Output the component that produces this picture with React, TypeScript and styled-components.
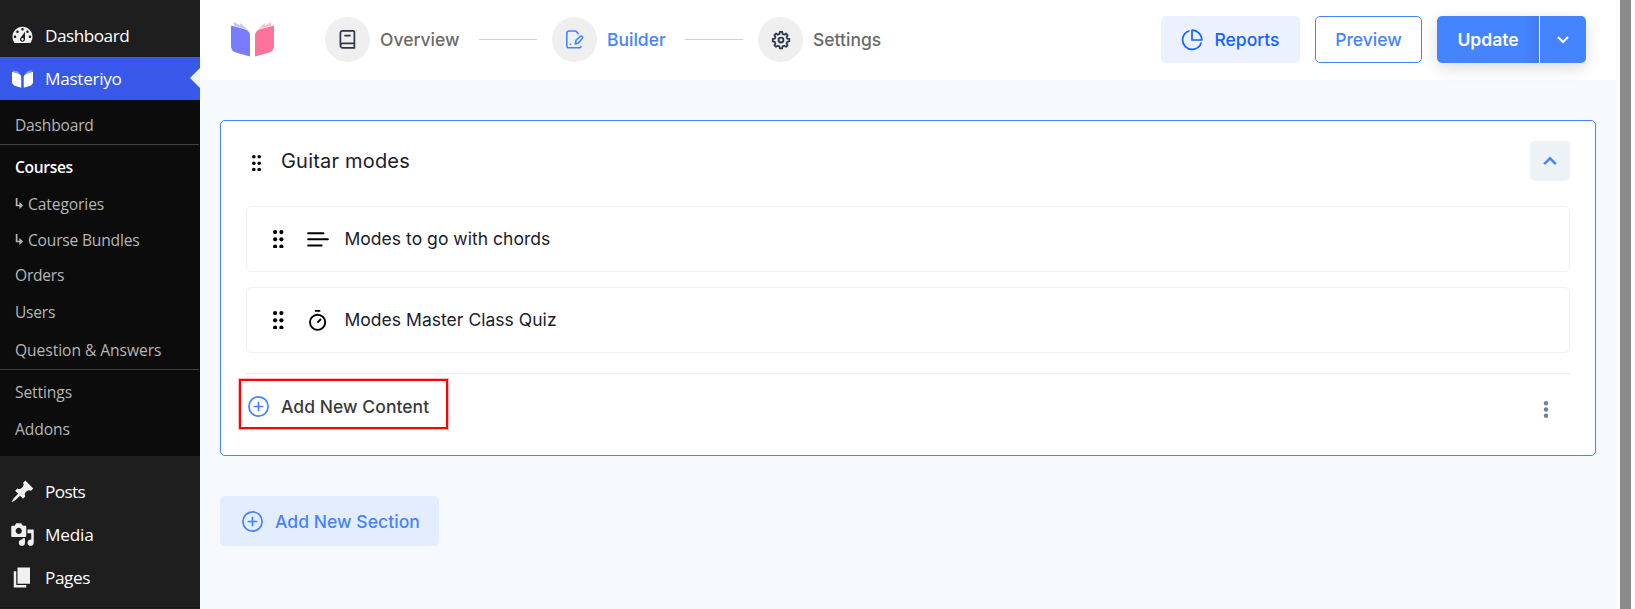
import React from 'react';
import styled, { createGlobalStyle, css } from 'styled-components';

const GlobalStyle = createGlobalStyle`
  * { box-sizing: border-box; }
  html, body { margin: 0; padding: 0; overflow: hidden; }
  body { font-family: Inter, "Liberation Sans", sans-serif; font-size: 17.5px; background: #fcfcfc; }
  svg { display: block; flex: none; }
  button { font: inherit; margin: 0; padding: 0; border: 0; background: none; }
`;

const Page = styled.div`
  display: flex;
  width: 1635px;
  height: 609px;
  overflow: hidden;
`;

const Sidebar = styled.nav`
  width: 200px;
  flex: none;
  background: #1e1e1e;
  font-family: "Open Sans", "Noto Sans", sans-serif;
  overflow: hidden;
`;

const MenuItem = styled.div<{ $active?: boolean; $first?: boolean; $spacing: number }>`
  position: relative;
  display: flex;
  align-items: center;
  height: 43px;
  margin-top: ${p => (p.$first ? 14 : 0)}px;
  padding-left: 10px;
  gap: 10px;
  color: #fff;
  font-size: 17.2px;
  letter-spacing: ${p => p.$spacing}px;
  background: ${p => (p.$active ? '#3858e9' : 'transparent')};
  ${p => p.$active && css`
    &::after {
      content: "";
      position: absolute;
      right: 0;
      top: 11px;
      border: 10px solid transparent;
      border-left-width: 0;
      border-right-color: #f0f0f1;
    }
  `}
`;

const Submenu = styled.div`
  height: 356px;
  padding-top: 7px;
  background: #0c0c0c;
`;

const SubItem = styled.div<{ $h: number; $current?: boolean; $spacing: number }>`
  display: flex;
  align-items: center;
  height: ${p => p.$h}px;
  padding: 0 0 2px 15px;
  font-size: 15.6px;
  letter-spacing: ${p => p.$spacing}px;
  font-weight: ${p => (p.$current ? 600 : 400)};
  color: ${p => (p.$current ? '#fff' : '#b6b6b7')};
  white-space: nowrap;
`;

const SubArrow = styled.svg`
  margin-right: 4px;
`;

const SubRule = styled.div<{ $gap: number }>`
  height: 1px;
  margin: 0 1px ${p => p.$gap}px 0;
  background: #414141;
`;

const LowerMenu = styled.div`
  height: 152px;
  padding-top: 14px;
  border-bottom: 1px solid #141414;
`;

const Main = styled.main`
  width: 1416px;
  flex: none;
  background: #f6fafd;
`;

const Header = styled.header`
  display: flex;
  align-items: center;
  height: 80px;
  padding: 0 30px 1px 31px;
  background: #fff;
`;

const Steps = styled.div`
  display: flex;
  align-items: center;
  margin-left: 51px;
`;

const Step = styled.div<{ $active?: boolean; $w: number }>`
  display: flex;
  align-items: center;
  gap: 10px;
  width: ${p => p.$w}px;
  font-weight: 500;
  color: ${p => (p.$active ? '#4584ff' : '#6b6b6b')};
  white-space: nowrap;
`;

const StepIcon = styled.span`
  display: flex;
  align-items: center;
  justify-content: center;
  width: 45px;
  height: 45px;
  flex: none;
  border-radius: 50%;
  background: #efefef;
`;

const StepLine = styled.div`
  width: 58px;
  height: 1px;
  margin-right: 15px;
  background: #cfd0d0;
`;

const Actions = styled.div`
  display: flex;
  gap: 15px;
  margin-left: auto;
`;

const Button = styled.button<{ $kind: 'soft' | 'outline'; $w: number }>`
  display: flex;
  align-items: center;
  justify-content: center;
  gap: 11px;
  width: ${p => p.$w}px;
  height: 47px;
  border-radius: 5px;
  font-weight: 500;
  color: ${p => (p.$kind === 'soft' ? '#1363ff' : '#4584ff')};
  background: ${p => (p.$kind === 'soft' ? '#ebf1ff' : '#fff')};
  border: ${p => (p.$kind === 'outline' ? '1px solid #4584ff' : '0')};
`;

const SplitButton = styled.div`
  display: flex;
  height: 47px;
  border-radius: 5px;
  box-shadow: 0 5px 16px rgba(0, 0, 0, 0.14);
  color: #fff;
`;

const SplitMain = styled.button`
  width: 102px;
  border-radius: 5px 0 0 5px;
  background: linear-gradient(90deg, #4584ff 85%, #407bee);
  color: #fff;
  font-weight: 600;
`;

const SplitToggle = styled.button`
  display: flex;
  align-items: center;
  justify-content: center;
  width: 47px;
  padding-right: 1px;
  border-left: 1px solid #fff;
  border-radius: 0 5px 5px 0;
  background: #4584ff;
`;

const Content = styled.div`
  padding: 40px 20px 0;
`;

const SectionCard = styled.section`
  height: 336px;
  padding: 20px 25px 0;
  border: 1px solid #4584ff;
  border-radius: 5px;
  background: #fff;
`;

const SectionHead = styled.div`
  display: flex;
  align-items: center;
  height: 40px;
  margin-bottom: 25px;
  padding-left: 6px;
`;

const SectionTitle = styled.h2`
  margin: 0 auto 0 20px;
  font-size: 20px;
  font-weight: 400;
  letter-spacing: 0.2px;
  color: #1a202c;
`;

const CollapseButton = styled.button`
  display: flex;
  align-items: center;
  justify-content: center;
  width: 40px;
  height: 40px;
  border-radius: 5px;
  background: #edf2f7;
`;

const LessonRow = styled.div`
  display: flex;
  align-items: center;
  height: 66px;
  margin-bottom: 15px;
  padding-left: 26px;
  border: 1px solid #edf2f7;
  border-radius: 5px;
  color: #1a202c;
`;

const LessonIcon = styled.span`
  display: flex;
  width: 26px;
  margin: 0 12px 0 23px;
`;

const LessonTitle = styled.span`
  padding-bottom: 2px;
  letter-spacing: 0.03px;
`;

const SectionFoot = styled.div`
  display: flex;
  align-items: flex-start;
  justify-content: space-between;
  margin-top: 20px;
  padding-right: 19px;
  border-top: 1px solid #ecedf0;
`;

const AddContent = styled.button`
  display: flex;
  align-items: center;
  gap: 12px;
  width: 209px;
  height: 50px;
  margin: 5px 0 0 -7px;
  padding: 5px 0 0 7px;
  border: 2px solid #f00;
  outline: 1px solid #ffb9b9;
  font-weight: 500;
  letter-spacing: 0.05px;
  color: #3a3a3a;
`;

const MoreButton = styled.button`
  margin-top: 26px;
`;

const AddSection = styled.button`
  display: flex;
  align-items: center;
  gap: 12px;
  width: 219px;
  height: 50px;
  margin-top: 40px;
  padding-left: 22px;
  border-radius: 5px;
  font-weight: 500;
  letter-spacing: 0.05px;
  color: #4584ff;
  background: #e4edfd;
`;

const Gutter = styled.div`
  width: 19px;
  padding-left: 4px;
  background: #fcfcfc;
`;

const Scrollbar = styled.div`
  width: 11px;
  height: 609px;
  background: #8b8b8b;
`;

const DashboardIcon = () => (
  <svg width="25" height="25" viewBox="0 0 20 20">
    <path fill="#f0f0f1" d="M3.76 16h12.48c1.1-1.37 1.76-3.11 1.76-5 0-4.42-3.58-8-8-8s-8 3.58-8 8c0 1.89.66 3.63 1.76 5zM10 4c.55 0 1 .45 1 1s-.45 1-1 1-1-.45-1-1 .45-1 1-1zM6 6c.55 0 1 .45 1 1s-.45 1-1 1-1-.45-1-1 .45-1 1-1zm8 0c.55 0 1 .45 1 1s-.45 1-1 1-1-.45-1-1 .45-1 1-1zm-5.37 5.55L12 7v6c0 1.1-.9 2-2 2s-2-.9-2-2c0-.57.24-1.08.63-1.45zM4 10c.55 0 1 .45 1 1s-.45 1-1 1-1-.45-1-1 .45-1 1-1zm12 0c.55 0 1 .45 1 1s-.45 1-1 1-1-.45-1-1 .45-1 1-1zm-5 3c0-.55-.45-1-1-1s-1 .45-1 1 .45 1 1 1 1-.45 1-1z" />
  </svg>
);

const BookMark = ({ width, height, left, right }: { width: number; height: number; left: string; right: string }) => (
  <svg width={width} height={height} viewBox="0 0 43 35" preserveAspectRatio="none">
    <path fill={left} d="M0 3.5 14.5 7.6Q19 9.500 19 13.5V34.5L5.5 30.8Q0 29 0 24Z" />
    <path fill={right} d="M43 3.5 28.5 7.6Q24 9.500 24 13.5V34.5L37.5 30.8Q43 29 43 24Z" />
    <path fill={left} opacity=".45" d="M3 0 9 3.2 16 7.6 3 3.8ZM9.5 1 13 4.4 17.5 8.8 9 4Z" />
    <path fill={right} opacity=".45" d="M40 0 34 3.2 27 7.6 40 3.8ZM33.5 1 30 4.4 25.5 8.8 34 4Z" />
  </svg>
);

const MenuBook = styled.span`
  display: flex;
  justify-content: center;
  width: 25px;
`;

const PinIcon = () => (
  <svg width="25" height="25" viewBox="0 0 20 20">
    <path fill="#f0f0f1" d="M10.44 3.02l1.82-1.82 6.36 6.35-1.83 1.82c-1.05-.68-2.48-.57-3.41.36l-.75.75c-.92.93-1.04 2.35-.35 3.41l-1.83 1.82-2.41-2.41-2.8 2.79c-.42.42-3.38 2.71-3.8 2.29s1.86-3.39 2.28-3.81l2.79-2.79L4.1 9.36l1.83-1.82c1.05.69 2.48.57 3.4-.36l.75-.75c.93-.92 1.05-2.35.36-3.41z" />
  </svg>
);

const MediaIcon = () => (
  <svg width="25" height="25" viewBox="0 0 20 20">
    <path fill="#f0f0f1" fillRule="evenodd" d="M13 11V4c0-.55-.45-1-1-1h-1.67L9 1H5L3.67 3H2c-.55 0-1 .45-1 1v7c0 .55.45 1 1 1h10c.55 0 1-.45 1-1zM7 4.5c1.38 0 2.5 1.12 2.5 2.5S8.38 9.500 7 9.500 4.500 8.380 4.500 7 5.620 4.500 7 4.500z" />
    <path fill="#f0f0f1" d="M14 6h5v10.500c0 1.380-1.120 2.500-2.500 2.500S14 17.880 14 16.500s1.120-2.500 2.500-2.500c.17 0 .34.020.5.050V9h-3V6zM10 14.050V13h2v3.500c0 1.380-1.120 2.500-2.500 2.500S7 17.880 7 16.500 8.120 14 9.500 14c.17 0 .34.020.5.050z" />
  </svg>
);

const PagesIcon = () => (
  <svg width="25" height="25" viewBox="0 0 20 20">
    <path fill="#f0f0f1" d="M6 15V2h10v13H6zm-1 1h8v2H3V5h2v11z" />
  </svg>
);

const OverviewIcon = () => (
  <svg width="17" height="21" viewBox="0 0 17 21" fill="none" stroke="#2d3748" strokeWidth="1.7" strokeLinecap="round">
    <path d="M3.500 1.800H14a1.400 1.400 0 0 1 1.400 1.400V18.800H3.800A2.400 2.400 0 0 1 1.400 16.400V3.800a2 2 0 0 1 2.100-2ZM1.500 16.300a2.300 2.300 0 0 1 2.300-2H15.400M6 6.600h5" />
  </svg>
);

const BuilderIcon = () => (
  <svg width="20" height="21" viewBox="0 0 20 21" fill="none" stroke="#4584ff" strokeWidth="1.6" strokeLinecap="round" strokeLinejoin="round">
    <path d="M13.200 4.600 10.900 2H3.800a2 2 0 0 0-2 2V16.800a2 2 0 0 0 2 2H14.600q1.200 0 1.400-1.300M5.400 15.300h.2" />
    <path d="m10.300 15 .7-3.700 4.100-3.800q1.200-.9 2.100 0 .9 1 0 2.100l-3.800 4.400Z" />
  </svg>
);

const GearIcon = () => (
  <svg width="20" height="20" viewBox="0 0 24 24" fill="none" stroke="#2d3748" strokeWidth="2.300" strokeLinejoin="round">
    <path d="M10.400 2.100h3.200l.5 2.700 2.200.9 2.300-1.500 2.200 2.200-1.500 2.300.9 2.200 2.700.5v3.200l-2.700.5-.9 2.200 1.500 2.300-2.200 2.200-2.300-1.500-2.200.9-.5 2.700h-3.200l-.5-2.700-2.200-.9-2.300 1.500-2.200-2.200 1.500-2.300-.9-2.200-2.700-.5v-3.200l2.700-.5.9-2.200-1.500-2.300 2.200-2.200 2.300 1.500 2.200-.9Z" transform="translate(1.100 .4) scale(.91)" />
    <circle cx="12" cy="12" r="2.900" />
  </svg>
);

const ReportsIcon = () => (
  <svg width="22" height="22" viewBox="0 0 22 22" fill="none" stroke="#1363ff" strokeWidth="1.700" strokeLinejoin="round">
    <path d="M7.700 2A9.500 9.500 0 1 0 20 14.200" strokeLinecap="round" />
    <path d="M11 1.200A9.700 9.700 0 0 1 20.800 11H11Z" />
  </svg>
);

const Chevron = ({ up, color, size = 12 }: { up?: boolean; color: string; size?: number }) => (
  <svg width={size} height={size * 0.75} viewBox="0 0 12 9" fill="none" stroke={color} strokeWidth="2.100">
    <path d={up ? 'M1 7 6 2l5 5' : 'M1 2l5 5 5-5'} />
  </svg>
);

const DragDots = ({ dx, dy, r }: { dx: number; dy: number; r: number }) => (
  <svg width={dx + 2 * r} height={2 * dy + 2 * r} fill="#000">
    {[0, 1, 2].map(i => (
      <React.Fragment key={i}>
        <circle cx={r} cy={r + i * dy} r={r} />
        <circle cx={r + dx} cy={r + i * dy} r={r} />
      </React.Fragment>
    ))}
  </svg>
);

const SectionDrag = styled.span`
  padding-top: 4px;
`;

const TextIcon = () => (
  <svg width="22" height="18" viewBox="0 0 22 18" stroke="#000" strokeWidth="2.100" strokeLinecap="round">
    <path d="M1.200 3.300h15.200M1.200 9.300h19.600M1.200 15.500h13.300" />
  </svg>
);

const TimerIcon = () => (
  <svg width="22" height="22" viewBox="0 0 22 22" fill="none" stroke="#000" strokeWidth="1.900">
    <circle cx="10.600" cy="13.300" r="7.600" />
    <path d="M7.900 1.900h5.400M10.400 13.600l3.600-3.600" />
  </svg>
);

const PlusCircle = () => (
  <svg width="21" height="21" viewBox="0 0 21 21" fill="none" stroke="#4584ff" strokeWidth="1.700" strokeLinecap="round">
    <circle cx="10.500" cy="10.500" r="9.600" />
    <path d="M10.500 6.400v8.200M6.400 10.500h8.200" />
  </svg>
);

const lessons = [
  { title: 'Modes to go with chords', icon: <TextIcon /> },
  { title: 'Modes Master Class Quiz', icon: <TimerIcon /> },
];

const HookArrow = () => (
  <SubArrow width="9" height="12" viewBox="0 0 9 12" fill="none" stroke="#b6b6b7" strokeWidth="1.700">
    <path d="M1.600 0V7.500H6" />
    <path d="M4.400 4 8.200 7.500 4.400 11Z" fill="#b6b6b7" stroke="none" />
  </SubArrow>
);

export default function App() {
  return (
    <Page>
      <GlobalStyle />
      <Sidebar>
        <MenuItem $first $spacing={-0.5}><DashboardIcon />Dashboard</MenuItem>
        <MenuItem $active $spacing={-0.3}>
          <MenuBook><BookMark width={21} height={18} left="#fff" right="#fff" /></MenuBook>
          Masteriyo
        </MenuItem>
        <Submenu>
          <SubItem $h={37} $spacing={-0.2}>Dashboard</SubItem>
          <SubRule $gap={4} />
          <SubItem $h={38} $current $spacing={-0.35}>Courses</SubItem>
          <SubItem $h={36} $spacing={-0.1}><HookArrow />Categories</SubItem>
          <SubItem $h={36} $spacing={-0.2}><HookArrow />Course Bundles</SubItem>
          <SubItem $h={34} $spacing={-0.25}>Orders</SubItem>
          <SubItem $h={40} $spacing={-0.25}>Users</SubItem>
          <SubItem $h={36} $spacing={-0.05}>Question &amp; Answers</SubItem>
          <SubRule $gap={5} />
          <SubItem $h={36} $spacing={-0.1}>Settings</SubItem>
          <SubItem $h={38} $spacing={-0.1}>Addons</SubItem>
        </Submenu>
        <LowerMenu>
          <MenuItem $spacing={-0.6}><PinIcon />Posts</MenuItem>
          <MenuItem $spacing={-0.2}><MediaIcon />Media</MenuItem>
          <MenuItem $spacing={-0.4}><PagesIcon />Pages</MenuItem>
        </LowerMenu>
      </Sidebar>
      <Main>
        <Header>
          <BookMark width={43} height={35} left="#787dff" right="#fd739c" />
          <Steps>
            <Step $w={154}><StepIcon><OverviewIcon /></StepIcon>Overview</Step>
            <StepLine />
            <Step $active $w={133}><StepIcon><BuilderIcon /></StepIcon>Builder</Step>
            <StepLine />
            <Step $w={130}><StepIcon><GearIcon /></StepIcon>Settings</Step>
          </Steps>
          <Actions>
            <Button $kind="soft" $w={139}><ReportsIcon />Reports</Button>
            <Button $kind="outline" $w={107}>Preview</Button>
            <SplitButton>
              <SplitMain>Update</SplitMain>
              <SplitToggle><Chevron color="#fff" /></SplitToggle>
            </SplitButton>
          </Actions>
        </Header>
        <Content>
          <SectionCard>
            <SectionHead>
              <SectionDrag><DragDots dx={5.4} dy={6.4} r={1.8} /></SectionDrag>
              <SectionTitle>Guitar modes</SectionTitle>
              <CollapseButton><Chevron up color="#4584ff" size={14} /></CollapseButton>
            </SectionHead>
            {lessons.map(lesson => (
              <LessonRow key={lesson.title}>
                <DragDots dx={6.300} dy={7.200} r={2.100} />
                <LessonIcon>{lesson.icon}</LessonIcon>
                <LessonTitle>{lesson.title}</LessonTitle>
              </LessonRow>
            ))}
            <SectionFoot>
              <AddContent><PlusCircle />Add New Content</AddContent>
              <MoreButton>
                <svg width="10" height="20" viewBox="0 0 10 20" fill="#718096">
                  <circle cx="5" cy="3.300" r="2.200" />
                  <circle cx="5" cy="9.500" r="2.200" />
                  <circle cx="5" cy="15.700" r="2.200" />
                </svg>
              </MoreButton>
            </SectionFoot>
          </SectionCard>
          <AddSection><PlusCircle />Add New Section</AddSection>
        </Content>
      </Main>
      <Gutter><Scrollbar /></Gutter>
    </Page>
  );
}
